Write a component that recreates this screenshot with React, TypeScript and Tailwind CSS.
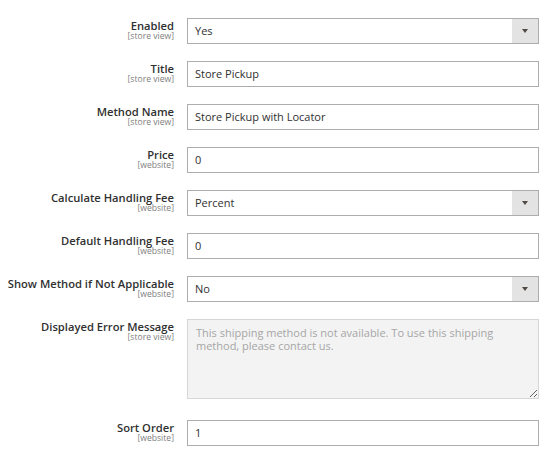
import React from "react";

type Field = {
  label: string;
  scope: string;
  kind: "select" | "text";
  value: string;
};

const fields: Field[] = [
  { label: "Enabled", scope: "[store view]", kind: "select", value: "Yes" },
  { label: "Title", scope: "[store view]", kind: "text", value: "Store Pickup" },
  { label: "Method Name", scope: "[store view]", kind: "text", value: "Store Pickup with Locator" },
  { label: "Price", scope: "[website]", kind: "text", value: "0" },
  { label: "Calculate Handling Fee", scope: "[website]", kind: "select", value: "Percent" },
  { label: "Default Handling Fee", scope: "[website]", kind: "text", value: "0" },
  { label: "Show Method if Not Applicable", scope: "[website]", kind: "select", value: "No" },
];

function Label({ label, scope }: { label: string; scope: string }) {
  return (
    <div className="w-[174px] shrink-0 pt-[2px] text-right">
      <div className="text-[11.2px] leading-[11px] font-semibold text-[#303030]">{label}</div>
      <div className="text-[8.6px] leading-[10px] text-[#808080]">{scope}</div>
    </div>
  );
}

function Control({ field }: { field: Field }) {
  return (
    <div className="ml-[13px] flex h-[26px] w-[352px] items-stretch border border-[#adadad] bg-white">
      <div className="flex flex-1 items-center pl-[7px] pt-[1px] text-[11px] text-[#303030]">{field.value}</div>
      {field.kind === "select" && (
        <div className="flex w-[26px] items-center justify-center bg-[#e3e3e3]">
          <span className="block h-0 w-0 border-x-[3.5px] border-t-[4px] border-x-transparent border-t-[#514943]" />
        </div>
      )}
    </div>
  );
}

export default function App() {
  return (
    <div className="h-[451px] w-[560px] bg-white pt-[18px] font-['Open_Sans',sans-serif]">
      {fields.map((f) => (
        <div key={f.label} className="mb-[17px] flex">
          <Label label={f.label} scope={f.scope} />
          <Control field={f} />
        </div>
      ))}

      <div className="mb-[21px] flex">
        <Label label="Displayed Error Message" scope="[store view]" />
        <textarea
          readOnly
          className="ml-[13px] block h-[80px] w-[352px] resize border border-[#d6d6d6] bg-[#f3f3f3] px-[8px] pt-[6px] text-[11px] leading-[13px] text-[#a6a6a6] outline-none"
          defaultValue="This shipping method is not available. To use this shipping method, please contact us."
        />
      </div>

      <div className="flex">
        <Label label="Sort Order" scope="[website]" />
        <Control field={{ label: "Sort Order", scope: "[website]", kind: "text", value: "1" }} />
      </div>
    </div>
  );
}
